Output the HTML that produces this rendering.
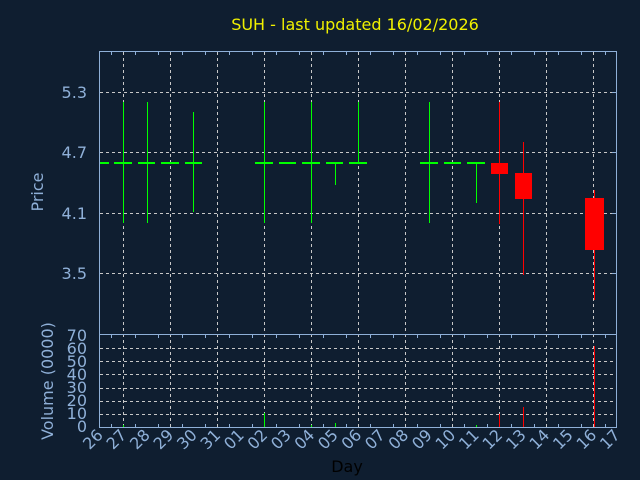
<!DOCTYPE html>
<html><head><meta charset="utf-8"><style>
html,body{margin:0;padding:0;background:#0f1e30;}
svg{display:block;font-family:"DejaVu Sans","Liberation Sans",sans-serif;}
</style></head><body>
<svg width="640" height="480" viewBox="0 0 640 480" xmlns="http://www.w3.org/2000/svg">
<rect width="640" height="480" fill="#0f1e30"/>
<text x="355" y="30" fill="#f0f000" font-size="16" text-anchor="middle">SUH - last updated 16/02/2026</text>
<g stroke="#c8c8c8" stroke-width="1" stroke-dasharray="3,3" fill="none" shape-rendering="crispEdges">
<path d="M123.5 52V427M170.5 52V427M217.5 52V427M264.5 52V427M311.5 52V427M358.5 52V427M405.5 52V427M452.5 52V427M499.5 52V427M546.5 52V427M593.5 52V427"/>
<path d="M100 92.5H617M100 152.5H617M100 213.5H617M100 273.5H617"/>
<path d="M100 348.5H617M100 361.5H617M100 374.5H617M100 388.5H617M100 401.5H617M100 414.5H617"/>
</g>
<g stroke="#8fb0d8" stroke-width="1" fill="none" shape-rendering="crispEdges">
<rect x="99.5" y="51.5" width="517" height="376"/>
<path d="M100 334.5H617"/>
<path d="M111.5 52v3M135.5 52v3M158.5 52v3M182.5 52v3M205.5 52v3M229.5 52v3M252.5 52v3M276.5 52v3M299.5 52v3M323.5 52v3M346.5 52v3M370.5 52v3M393.5 52v3M417.5 52v3M440.5 52v3M464.5 52v3M487.5 52v3M511.5 52v3M534.5 52v3M558.5 52v3M581.5 52v3M605.5 52v3"/>
<path d="M111.5 427v-3M135.5 427v-3M158.5 427v-3M182.5 427v-3M205.5 427v-3M229.5 427v-3M252.5 427v-3M276.5 427v-3M299.5 427v-3M323.5 427v-3M346.5 427v-3M370.5 427v-3M393.5 427v-3M417.5 427v-3M440.5 427v-3M464.5 427v-3M487.5 427v-3M511.5 427v-3M534.5 427v-3M558.5 427v-3M581.5 427v-3M605.5 427v-3"/>
<path d="M111.5 335v3M135.5 335v3M158.5 335v3M182.5 335v3M205.5 335v3M229.5 335v3M252.5 335v3M276.5 335v3M299.5 335v3M323.5 335v3M346.5 335v3M370.5 335v3M393.5 335v3M417.5 335v3M440.5 335v3M464.5 335v3M487.5 335v3M511.5 335v3M534.5 335v3M558.5 335v3M581.5 335v3M605.5 335v3"/>
<path d="M612 92.5h5M612 152.5h5M612 213.5h5M612 273.5h5"/>
</g>
<g fill="#8fb0d8" font-size="16" text-anchor="end">
<text x="87" y="98">5.3</text><text x="87" y="158">4.7</text><text x="87" y="219">4.1</text><text x="87" y="279">3.5</text>
<text x="87" y="341">70</text><text x="87" y="354">60</text><text x="87" y="367">50</text><text x="87" y="380">40</text><text x="87" y="393">30</text><text x="87" y="406">20</text><text x="87" y="419">10</text><text x="87" y="432">0</text>
</g>
<text transform="translate(43,192) rotate(-90)" fill="#8fb0d8" font-size="16" text-anchor="middle">Price</text>
<text transform="translate(53,381) rotate(-90)" fill="#8fb0d8" font-size="16" text-anchor="middle">Volume (0000)</text>
<g fill="#8fb0d8" font-size="16" text-anchor="end">
<text transform="translate(104,436) rotate(-45)">26</text>
<text transform="translate(127.5,436) rotate(-45)">27</text>
<text transform="translate(151,436) rotate(-45)">28</text>
<text transform="translate(174.5,436) rotate(-45)">29</text>
<text transform="translate(198,436) rotate(-45)">30</text>
<text transform="translate(221.5,436) rotate(-45)">31</text>
<text transform="translate(245,436) rotate(-45)">01</text>
<text transform="translate(268.5,436) rotate(-45)">02</text>
<text transform="translate(292,436) rotate(-45)">03</text>
<text transform="translate(315.5,436) rotate(-45)">04</text>
<text transform="translate(339,436) rotate(-45)">05</text>
<text transform="translate(362.5,436) rotate(-45)">06</text>
<text transform="translate(386,436) rotate(-45)">07</text>
<text transform="translate(409.5,436) rotate(-45)">08</text>
<text transform="translate(433,436) rotate(-45)">09</text>
<text transform="translate(456.5,436) rotate(-45)">10</text>
<text transform="translate(480,436) rotate(-45)">11</text>
<text transform="translate(503.5,436) rotate(-45)">12</text>
<text transform="translate(527,436) rotate(-45)">13</text>
<text transform="translate(550.5,436) rotate(-45)">14</text>
<text transform="translate(574,436) rotate(-45)">15</text>
<text transform="translate(597.5,436) rotate(-45)">16</text>
<text transform="translate(621,436) rotate(-45)">17</text>
</g>
<text x="347" y="472" fill="#000" font-size="16" text-anchor="middle">Day</text>
<g fill="#00ff00" shape-rendering="crispEdges">
<rect x="123" y="102" width="1" height="121"/>
<rect x="147" y="102" width="1" height="121"/>
<rect x="193" y="112" width="1" height="100"/>
<rect x="264" y="102" width="1" height="121"/>
<rect x="311" y="102" width="1" height="121"/>
<rect x="335" y="163" width="1" height="22"/>
<rect x="358" y="102" width="1" height="61"/>
<rect x="429" y="102" width="1" height="121"/>
<rect x="476" y="163" width="1" height="40"/>
<rect x="100" y="162" width="9" height="2"/>
<rect x="114" y="162" width="18" height="2"/>
<rect x="138" y="162" width="17" height="2"/>
<rect x="161" y="162" width="18" height="2"/>
<rect x="185" y="162" width="17" height="2"/>
<rect x="255" y="162" width="18" height="2"/>
<rect x="279" y="162" width="17" height="2"/>
<rect x="302" y="162" width="18" height="2"/>
<rect x="326" y="162" width="17" height="2"/>
<rect x="349" y="162" width="18" height="2"/>
<rect x="420" y="162" width="18" height="2"/>
<rect x="444" y="162" width="17" height="2"/>
<rect x="467" y="162" width="18" height="2"/>
<rect x="123" y="425" width="1" height="2"/>
<rect x="264" y="413" width="1" height="14"/>
<rect x="311" y="425" width="1" height="2"/>
<rect x="335" y="423" width="1" height="4"/>
<rect x="476" y="425" width="1" height="2"/>
</g>
<g fill="#ff0000" shape-rendering="crispEdges">
<rect x="499" y="102" width="1" height="122"/>
<rect x="523" y="142" width="1" height="133"/>
<rect x="594" y="190" width="1" height="110"/>
<rect x="491" y="163" width="17" height="11"/>
<rect x="515" y="173" width="17" height="26"/>
<rect x="585" y="198" width="19" height="52"/>
<rect x="499" y="414" width="1" height="13"/>
<rect x="523" y="407" width="1" height="20"/>
<rect x="594" y="346" width="1" height="81"/>
</g>
</svg>
</body></html>
